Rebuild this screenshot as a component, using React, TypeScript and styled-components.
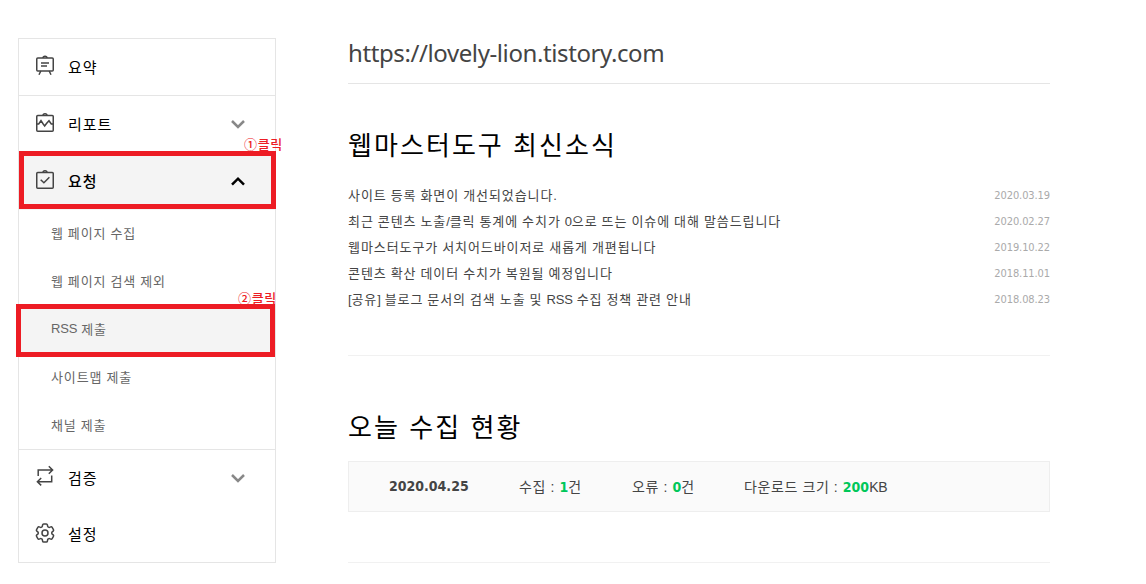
import { ReactNode } from "react";
import styled, { createGlobalStyle } from "styled-components";
import { HiOutlineCog6Tooth } from "react-icons/hi2";

const GlobalStyle = createGlobalStyle`
  * {
    box-sizing: border-box;
  }
  body {
    margin: 0;
    background: #fff;
    font-family: "Liberation Sans", "Noto Sans CJK KR", sans-serif;
    overflow: hidden;
  }
  ul {
    margin: 0;
    padding: 0;
    list-style: none;
  }
`;

const Page = styled.div`
  display: flex;
  align-items: flex-start;
  gap: 72px;
  width: 1146px;
  height: 584px;
  padding: 38px 96px 0 18px;
`;

const Sidebar = styled.nav`
  flex: none;
  width: 258px;
  height: 525px;
  border: 1px solid #e5e5e5;
`;

const MenuItem = styled.div<{ $line?: boolean; $active?: boolean }>`
  position: relative;
  display: flex;
  align-items: center;
  height: 57px;
  padding: 0 29px 0 16px;
  border-bottom: ${({ $line }) => ($line ? "1px solid #e5e5e5" : "none")};
  background: ${({ $active }) => ($active ? "#f4f4f4" : "none")};

  &:first-child {
    padding-top: 1px;
  }
  &:last-child {
    height: 56px;
  }
`;

const MenuIcon = styled.span`
  display: flex;
  align-items: center;
  justify-content: center;
  width: 20px;
  height: 22px;
  margin: 0 13px 5px 0;
  color: #444;

  svg {
    flex: none;
  }
`;

const MenuLabel = styled.span<{ $bold?: boolean }>`
  flex: 1;
  color: #000;
  font-size: 15px;
  font-weight: ${({ $bold }) => ($bold ? 500 : 400)};
  letter-spacing: 0.9px;
  line-height: 20px;
`;

const SubMenu = styled.ul`
  height: 240px;
  border-bottom: 1px solid #e5e5e5;
`;

const SubItem = styled.li<{ $active?: boolean }>`
  position: relative;
  display: flex;
  align-items: center;
  height: 48px;
  padding: 0 0 4px 32px;
  background: ${({ $active }) => ($active ? "#f4f4f4" : "none")};
  color: #666;
  font-size: 13px;
  letter-spacing: 0.9px;
  word-spacing: -0.5px;
  white-space: pre;
`;

const Latin = styled.span`
  letter-spacing: -0.2px;
`;

/* 클릭 순서 표시용 빨간 테두리 */
const Marker = styled.div<{ $x: number; $y: number; $w: number; $h: number }>`
  position: absolute;
  z-index: 1;
  left: ${({ $x }) => $x}px;
  top: ${({ $y }) => $y}px;
  width: ${({ $w }) => $w}px;
  height: ${({ $h }) => $h}px;
  border: 5px solid #ed1c24;
`;

const MarkerText = styled.span<{ $x: number; $y: number }>`
  position: absolute;
  left: ${({ $x }) => $x}px;
  top: ${({ $y }) => $y}px;
  color: #ed1c24;
  font-family: "Noto Sans CJK KR", sans-serif;
  font-size: 13px;
  font-weight: 500;
  letter-spacing: 0.7px;
  line-height: 16px;
  white-space: nowrap;
`;

const Main = styled.main`
  flex: 1;
`;

const SiteUrl = styled.div`
  height: 46px;
  border-bottom: 1px solid #e5e5e5;
  color: #444;
  font-family: "Noto Sans", sans-serif;
  font-size: 24px;
  letter-spacing: -0.4px;
  line-height: 29px;
`;

const Section = styled.section<{ $height: number; $top: number }>`
  height: ${({ $height }) => $height}px;
  padding-top: ${({ $top }) => $top}px;
  border-bottom: 1px solid #f1f1f1;
`;

const Title = styled.h2`
  margin: 0;
  color: #000;
  font-size: 26px;
  font-weight: 400;
  letter-spacing: 2.05px;
  line-height: 36px;
`;

const NewsList = styled.ul`
  margin-top: 19px;
`;

const NewsItem = styled.li`
  display: flex;
  justify-content: space-between;
  height: 26px;
  color: #444;
  font-size: 13px;
  letter-spacing: 0.92px;
  word-spacing: -0.5px;
  line-height: 26px;
`;

const NewsDate = styled.span`
  color: #aaa;
  font-family: "DejaVu Sans Condensed", "DejaVu Sans", sans-serif;
  font-stretch: condensed;
  font-size: 11px;
  letter-spacing: -0.1px;
`;

const Status = styled.div`
  display: flex;
  align-items: center;
  height: 51px;
  margin-top: 15px;
  padding: 0 0 2px 40px;
  border: 1px solid #eee;
  background: #fafafa;
  color: #444;
  font-size: 14px;
  white-space: pre;
`;

const StatusDate = styled.strong`
  width: 130px;
  font-family: "DejaVu Sans Condensed", "DejaVu Sans", sans-serif;
  font-stretch: condensed;
`;

const StatusItem = styled.span<{ $width?: number }>`
  width: ${({ $width }) => ($width ? `${$width}px` : "auto")};
  letter-spacing: 0.6px;
`;

const Count = styled.strong`
  color: #00c759;
  font-family: "DejaVu Sans Condensed", "DejaVu Sans", sans-serif;
  font-stretch: condensed;
  letter-spacing: 0;
`;

const Svg = ({ children }: { children: ReactNode }) => (
  <svg width="20" height="22" viewBox="0 0 20 22" fill="none" stroke="currentColor" strokeWidth="1.5">
    {children}
  </svg>
);

const SummaryIcon = () => (
  <Svg>
    <rect x="1.75" y="4" width="16.5" height="13" rx="1" />
    <path d="M8 4C8 1.5 12 1.5 12 4M6 9h8M6 12h6M5.8 17l-1.8 3.8M14.2 17l1.8 3.8" />
  </Svg>
);

const ReportIcon = () => (
  <Svg>
    <rect x="1.75" y="4.5" width="16.5" height="15.8" rx="1" />
    <path d="M8 4.5C8 2 12 2 12 4.5M2 13h1.7l2.3-3.3L8.2 13l1.5 2 1.6-2.2.2-.3 2.5-2.8 2.3 3.3H18" />
  </Svg>
);

const RequestIcon = () => (
  <Svg>
    <rect x="1.75" y="4.5" width="16.5" height="15.8" rx="1" />
    <path d="M8 4.5C8 2 12 2 12 4.5M5.7 11.7l3.2 3.1 5.5-5.6" />
  </Svg>
);

const VerifyIcon = () => (
  <Svg>
    <path d="M3.2 11V5h14M13.8 1.3L17.6 5l-3.8 3.7M16.7 10.5v6.2h-14M6.2 13l-3.8 3.7 3.8 3.7" />
  </Svg>
);

const ChevronSvg = styled.svg`
  margin-bottom: 1px;
`;

const Chevron = ({ open }: { open?: boolean }) => (
  <ChevronSvg width="16" height="12" viewBox="0 0 16 12" fill="none" stroke={open ? "#000" : "#888"} strokeWidth="2.5">
    <path d={open ? "M2 9.7l6-6 6 6" : "M2 3l6 6 6-6"} />
  </ChevronSvg>
);

const news = [
  { title: "사이트 등록 화면이 개선되었습니다.", date: "2020.03.19" },
  {
    title: (
      <>
        최근 콘텐츠 노출<Latin>/</Latin>클릭 통계에 수치가 <Latin>0</Latin>으로 뜨는 이슈에 대해 말씀드립니다
      </>
    ),
    date: "2020.02.27",
  },
  { title: "웹마스터도구가 서치어드바이저로 새롭게 개편됩니다", date: "2019.10.22" },
  { title: "콘텐츠 확산 데이터 수치가 복원될 예정입니다", date: "2018.11.01" },
  {
    title: (
      <>
        <Latin>[</Latin>공유<Latin>]</Latin> 블로그 문서의 검색 노출 및 <Latin>RSS</Latin> 수집 정책 관련 안내
      </>
    ),
    date: "2018.08.23",
  },
];

const App = () => {
  return (
    <Page>
      <GlobalStyle />
      <Sidebar>
        <MenuItem $line>
          <MenuIcon><SummaryIcon /></MenuIcon>
          <MenuLabel>요약</MenuLabel>
        </MenuItem>
        <MenuItem>
          <MenuIcon><ReportIcon /></MenuIcon>
          <MenuLabel>리포트</MenuLabel>
          <Chevron />
        </MenuItem>
        <MenuItem $active>
          <MenuIcon><RequestIcon /></MenuIcon>
          <MenuLabel $bold>요청</MenuLabel>
          <Chevron open />
          <Marker $x={0} $y={-2} $w={257} $h={58} />
          <MarkerText $x={225} $y={-17}>①클릭</MarkerText>
        </MenuItem>
        <SubMenu>
          <SubItem>웹 페이지 수집</SubItem>
          <SubItem>웹 페이지 검색 제외</SubItem>
          <SubItem $active>
            <Latin>RSS</Latin>
            <span> 제출</span>
            <Marker $x={-3} $y={-2} $w={259} $h={53} />
            <MarkerText $x={219} $y={-16}>②클릭</MarkerText>
          </SubItem>
          <SubItem>사이트맵 제출</SubItem>
          <SubItem>채널 제출</SubItem>
        </SubMenu>
        <MenuItem>
          <MenuIcon><VerifyIcon /></MenuIcon>
          <MenuLabel>검증</MenuLabel>
          <Chevron />
        </MenuItem>
        <MenuItem>
          <MenuIcon><HiOutlineCog6Tooth size={24} /></MenuIcon>
          <MenuLabel>설정</MenuLabel>
        </MenuItem>
      </Sidebar>
      <Main>
        <SiteUrl>https://lovely-lion.tistory.com</SiteUrl>
        <Section $height={272} $top={44}>
          <Title>웹마스터도구 최신소식</Title>
          <NewsList>
            {news.map(({ title, date }) => (
              <NewsItem key={date}>
                <span>{title}</span>
                <NewsDate>{date}</NewsDate>
              </NewsItem>
            ))}
          </NewsList>
        </Section>
        <Section $height={207} $top={54}>
          <Title>오늘 수집 현황</Title>
          <Status>
            <StatusDate>2020.04.25</StatusDate>
            <StatusItem $width={113}>수집 : <Count>1</Count>건</StatusItem>
            <StatusItem $width={112}>오류 : <Count>0</Count>건</StatusItem>
            <StatusItem>다운로드 크기 : <Count>200</Count><Latin>KB</Latin></StatusItem>
          </Status>
        </Section>
      </Main>
    </Page>
  );
};

export default App;
